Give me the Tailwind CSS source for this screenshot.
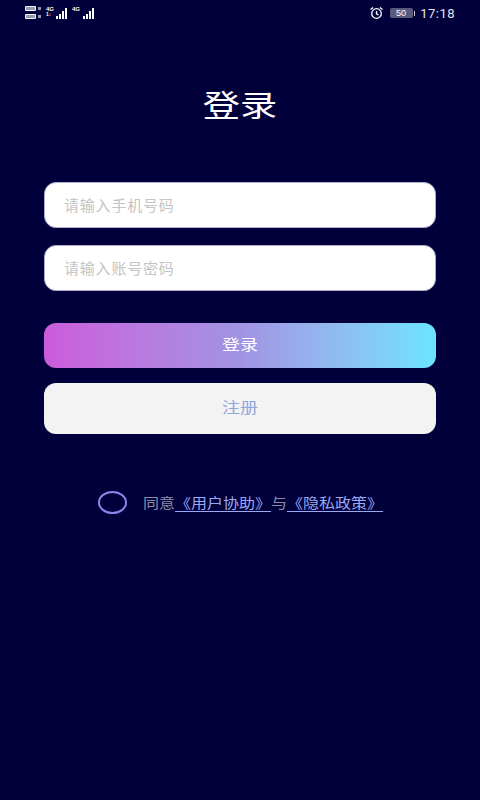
<!DOCTYPE html>
<html lang="zh-CN">
<head>
    <meta charset="UTF-8">
    <meta name="viewport" content="width=device-width, initial-scale=1.0">
    <title>登录</title>
    <script src="https://cdn.jsdelivr.net/npm/@tailwindcss/browser@4"></script>
</head>
<body class="bg-[#01003a] h-[800px] w-[480px] overflow-hidden font-['Liberation_Sans','Noto_Sans_CJK_SC',sans-serif]">
    <!-- status bar -->
    <div class="h-[26px] flex items-start justify-between pl-[25px] pr-[25px] pt-[5px] text-white">
        <div class="flex items-start">
            <div class="flex flex-col gap-[3px] mt-[1px]">
                <div class="flex items-center gap-[2px]"><span class="w-[11px] h-[5px] border border-white/90 rounded-[1px] bg-white/60"></span><span class="w-[3px] h-[3px] bg-white/60"></span></div>
                <div class="flex items-center gap-[2px]"><span class="w-[11px] h-[5px] border border-white/90 rounded-[1px] bg-white/60"></span><span class="w-[3px] h-[3px] bg-white/60"></span></div>
            </div>
            <div class="relative flex items-end gap-[1px] h-[14px] w-[26px] justify-end">
                <span class="absolute left-[5px] top-[1px] text-[6px] leading-[6px] font-bold">4G</span>
                <span class="absolute left-[5px] bottom-[2px] text-[5px] leading-[5px] font-bold">1↓</span>
                <span class="w-[2px] h-[3px] bg-white"></span><span class="w-[2px] h-[5px] bg-white"></span><span class="w-[2px] h-[8px] bg-white"></span><span class="w-[2px] h-[11px] bg-white"></span>
            </div>
            <div class="relative flex items-end gap-[1px] h-[14px] w-[27px] justify-end">
                <span class="absolute left-[5px] top-[1px] text-[6px] leading-[6px] font-bold">4G</span>
                <span class="w-[2px] h-[3px] bg-white"></span><span class="w-[2px] h-[5px] bg-white"></span><span class="w-[2px] h-[8px] bg-white"></span><span class="w-[2px] h-[11px] bg-white"></span>
            </div>
        </div>
        <div class="flex items-center h-[16px]">
            <svg class="w-[15px] h-[14px]" viewBox="0 0 15 14" fill="none" stroke="white" stroke-width="1.3">
                <circle cx="7.5" cy="7.5" r="4.8"/>
                <path d="M7.5 5v2.8l2 1M1.5 3.6l2.6-2.2M13.5 3.6l-2.6-2.2"/>
            </svg>
            <div class="flex items-center gap-[1px] ml-[6px]">
                <div class="w-[23px] h-[10px] rounded-[2px] bg-white/35 flex items-center justify-center text-[9px] leading-none text-white">50</div>
                <span class="w-[1.5px] h-[5px] bg-white/80"></span>
            </div>
            <span class="ml-[5px] text-[13px] tracking-[0.5px] leading-none text-white/90 font-['Roboto',sans-serif]">17:18</span>
        </div>
    </div>

    <h1 class="mt-[60px] h-[40px] w-fit mx-auto text-center text-white text-[30px] leading-[40px] scale-x-[1.24]">登录</h1>

    <div class="mx-[44px] mt-[56px] flex flex-col">
        <input type="text" placeholder="请输入手机号码" class="h-[46px] bg-white rounded-[12px] border border-[#b0aecf] pl-[19px] pr-[20px] text-[15px] tracking-[0.8px] placeholder:text-[#c4c4c4] outline-none">
        <input type="password" placeholder="请输入账号密码" class="h-[46px] mt-[17px] bg-white rounded-[12px] border border-[#b0aecf] pl-[19px] pr-[20px] text-[15px] tracking-[0.8px] placeholder:text-[#c4c4c4] outline-none">
        <button class="h-[45px] mt-[32px] rounded-[12px] bg-linear-to-r from-[#cb5bdc] via-[#a193e3] to-[#69e4ff] text-white text-[15px]"><span class="inline-block scale-x-[1.2]">登录</span></button>
        <button class="h-[51px] mt-[15px] rounded-[12px] bg-[#f3f3f3] text-[#8ea6dc] text-[15px]"><span class="inline-block scale-x-[1.2]">注册</span></button>
    </div>

    <div class="mt-[57px] flex items-center pl-[98px]">
        <span class="w-[29px] h-[23px] rounded-[50%] border-2 border-[#8f85ea]"></span>
        <p class="ml-[16px] text-[14px] leading-[20px] text-[#8b8ba8] whitespace-nowrap origin-left scale-x-[1.143]">同意<a class="text-[#9aa8f5] underline underline-offset-[3px]">《用户协助》</a>与<a class="text-[#9aa8f5] underline underline-offset-[3px]">《隐私政策》</a></p>
    </div>
</body>
</html>
